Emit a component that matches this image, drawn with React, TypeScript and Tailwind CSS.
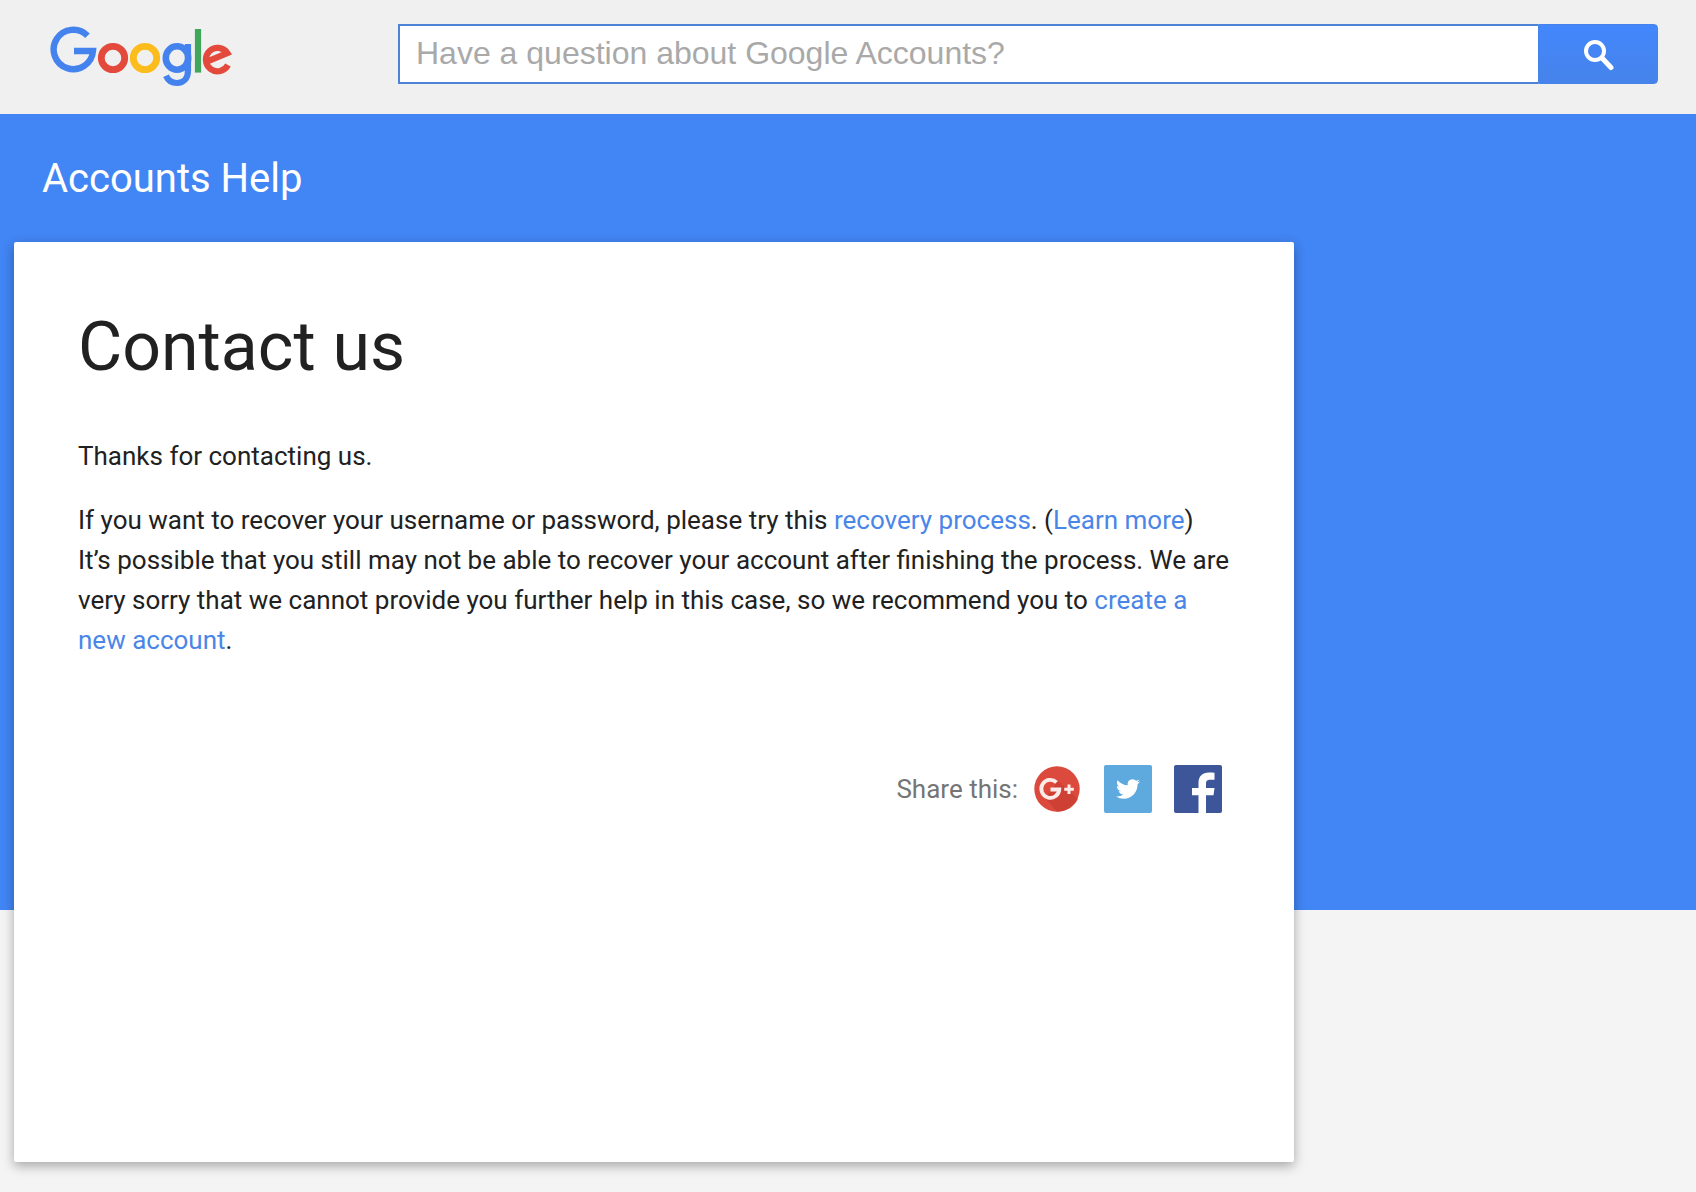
import React from "react";

function GoogleLogo() {
  return (
    <svg viewBox="0 0 182 62" className="h-[62px] w-[182px]" fill="none" strokeWidth="6" aria-hidden="true">
      <path d="M37.500 9.700A19.700 19.700 0 1 0 43 25H24" stroke="#4483ee" strokeWidth="6.400" strokeLinejoin="miter" />
      <circle cx="63" cy="32" r="11.700" stroke="#e34a3c" strokeWidth="6.800" />
      <circle cx="95" cy="32" r="11.700" stroke="#fbbc1c" strokeWidth="6.800" />
      <ellipse cx="127" cy="32" rx="11.200" ry="11.700" stroke="#4483ee" strokeWidth="6.600" />
      <path d="M138 18V44.500C138 52.500 133.500 57 127 57C121.500 57 118 54.500 116 49.800" stroke="#4483ee" strokeWidth="6.200" />
      <path d="M148 3V46.600" stroke="#3fa65a" strokeWidth="6.200" />
      <path d="M178 39A11.700 11.700 0 1 1 177.300 27L157.500 35.300" stroke="#e34a3c" strokeWidth="6.200" />
    </svg>
  );
}

function SearchIcon() {
  return (
    <svg viewBox="0 0 32 32" className="size-8" fill="none" stroke="#fff" aria-hidden="true">
      <circle cx="13" cy="12" r="9" strokeWidth="4" />
      <path d="M20 19L29 28.500" strokeWidth="5" strokeLinecap="round" />
    </svg>
  );
}

function GooglePlusIcon() {
  return (
    <svg viewBox="0 0 48 48" className="size-12" fill="none" aria-hidden="true">
      <circle cx="23" cy="24" r="22.700" fill="#dc4a3d" />
      <path d="M24 16L44 34A22.700 22.700 0 0 1 23 46.700L11 33Z" fill="#c93c30" fillOpacity=".7" />
      <path d="M22.500 17.300A9 9 0 1 0 25.300 24.500H16.500" stroke="#fbecea" strokeWidth="3.800" />
      <path d="M35 19.500V29M30.200 24.200H39.800" stroke="#fbecea" strokeWidth="3" />
    </svg>
  );
}

function TwitterIcon() {
  return (
    <svg viewBox="0 0 48 48" className="size-12" aria-hidden="true">
      <rect width="48" height="48" rx="2" fill="#5ea9dd" />
      <g transform="translate(12 12)">
        <path
          fill="#fff"
          d="M23.950 4.570a10 10 0 0 1-2.820.770 4.960 4.960 0 0 0 2.160-2.720c-.950.550-2 .950-3.130 1.180a4.920 4.920 0 0 0-8.380 4.480C7.690 8.090 4.070 6.130 1.640 3.160a4.820 4.820 0 0 0-.670 2.480c0 1.710.870 3.210 2.190 4.100a4.900 4.900 0 0 1-2.230-.620v.060a4.920 4.920 0 0 0 3.950 4.830 5 5 0 0 1-2.210.080 4.940 4.940 0 0 0 4.600 3.420A9.870 9.870 0 0 1 0 19.540a13.990 13.990 0 0 0 7.560 2.210c9.050 0 14-7.500 14-13.980 0-.210 0-.420-.020-.630a9.940 9.940 0 0 0 2.410-2.570z"
        />
      </g>
    </svg>
  );
}

function FacebookIcon() {
  return (
    <svg viewBox="0 0 48 48" className="size-12" aria-hidden="true">
      <rect width="48" height="48" rx="2" fill="#3c5699" />
      <path
        fill="#fff"
        d="M24.500 48V30.200H18V23H24.500V18C24.500 11 28.500 7.500 35 7.500C37.500 7.500 39.500 7.700 40.500 7.800V14.800H36.500C33 14.800 32 16.200 32 18.700V23H40.500L39.500 30.200H32V48Z"
      />
    </svg>
  );
}

const shareLinks = [
  { label: "Google+", icon: <GooglePlusIcon /> },
  { label: "Twitter", icon: <TwitterIcon /> },
  { label: "Facebook", icon: <FacebookIcon /> },
];

function TextLink({ children }: { children: React.ReactNode }) {
  return (
    <a href="#" className="text-[#4a86e8] hover:underline">
      {children}
    </a>
  );
}

export default function App() {
  return (
    <div className="min-h-screen bg-[#f4f4f4] font-['Roboto',sans-serif] text-[#212121]">
      <header className="flex items-start bg-[#f0f0f0] pt-6 pr-[38px] pb-[30px] pl-[50px]">
        <a href="#" aria-label="Google" className="mr-[166px] -mb-4 shrink-0 pt-0.5">
          <GoogleLogo />
        </a>
        <form className="flex h-[60px] min-w-0 flex-1" onSubmit={(e) => e.preventDefault()}>
          <input
            type="text"
            aria-label="Search help"
            placeholder="Have a question about Google Accounts?"
            className="min-w-0 flex-1 border-2 border-r-0 border-[#4d82d6] bg-white px-4 pb-0.5 font-['Liberation_Sans',Arial,sans-serif] text-[32px] outline-none placeholder:text-[#a9a9a9]"
          />
          <button
            type="submit"
            aria-label="Search"
            className="flex w-[120px] items-center justify-center rounded-r border border-[#4683ea] bg-linear-to-b from-[#4387fd] to-[#4683ea] pt-0.5"
          >
            <SearchIcon />
          </button>
        </form>
      </header>

      <div className="grid">
        <div className="col-start-1 row-start-1 h-[796px] bg-[#4285f4]" />
        <div className="col-start-1 row-start-1 px-3.5 pb-[30px]">
          <div className="flex h-32 items-center px-7 pt-0.5 text-[40px] text-white">Accounts Help</div>
          <main className="min-h-[920px] max-w-[1280px] rounded-xs bg-white px-16 pt-[65px] shadow-[0_4px_12px_rgba(0,0,0,0.32)]">
            <h1 className="text-[68px] leading-[80px]">Contact us</h1>
            <div className="mt-[49px] space-y-6 text-[26px] leading-10">
              <p>Thanks for contacting us.</p>
              <p>
                If you want to recover your username or password, please try this <TextLink>recovery process</TextLink>. (
                <TextLink>Learn more</TextLink>)
                <br />
                It’s possible that you still may not be able to recover your account after finishing the process. We are
                very sorry that we cannot provide you further help in this case, so we recommend you to{" "}
                <TextLink>create a new account</TextLink>.
              </p>
            </div>
            <div className="mt-[105px] flex items-center justify-end pr-2">
              <span className="mr-4 text-[26px] text-[#757575]">Share this:</span>
              <div className="flex gap-[22px]">
                {shareLinks.map((link) => (
                  <a key={link.label} href="#" aria-label={link.label}>
                    {link.icon}
                  </a>
                ))}
              </div>
            </div>
          </main>
        </div>
      </div>
    </div>
  );
}
